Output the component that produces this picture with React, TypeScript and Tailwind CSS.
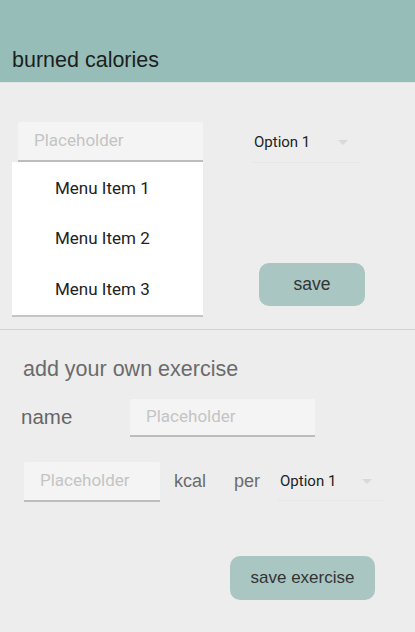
import { useState } from "react";

const arial = "font-['Liberation_Sans',Arial,sans-serif]";
const roboto = "font-['Roboto',sans-serif]";

export default function App() {
  const [items] = useState(["Menu Item 1", "Menu Item 2", "Menu Item 3"]);

  return (
    <div className="w-[415px] h-[632px] bg-[#ededed] overflow-hidden">
      <header className="h-[83px] bg-[#97bdb9] border-b border-[#dfe6e5] flex items-end px-3 pb-[10px]">
        <h1 className={`${arial} text-[21.5px] leading-[24px] text-[#1b1f1e]`}>burned calories</h1>
      </header>

      <section className="flex pt-[39px] pb-[12px] pl-3 border-b border-[#c2dbd7]">
        <div className="flex flex-col w-[191px]">
          <TextField className="ml-[6px] w-[185px] h-[40px]" />
          <ul className="bg-white border-b-2 border-[#c4c4c4] flex flex-col pt-[1px]">
            {items.map((item) => (
              <li
                key={item}
                className={`${roboto} h-[50.5px] shrink-0 flex items-center pl-[43px] text-[17px] text-[#222]`}
              >
                {item}
              </li>
            ))}
          </ul>
        </div>

        <div className="ml-[49px] flex flex-col">
          <Select className="w-[108px] h-[40px] mt-[1px]" />
          <button
            className={`${arial} ml-[7px] mt-[100px] w-[106px] h-[43px] rounded-[10px] bg-[#a9c6c2] text-[17.5px] text-[#333]`}
          >
            save
          </button>
        </div>
      </section>

      <section className="pt-[27px]">
        <h2 className={`${arial} pl-[23px] text-[21.5px] leading-[24px] text-[#6b6b6b]`}>add your own exercise</h2>

        <div className="flex items-center mt-[18px] pl-[21px]">
          <span className={`${arial} w-[109px] text-[20.5px] text-[#666]`}>name</span>
          <TextField className="w-[185px] h-[38px]" />
        </div>

        <div className="flex items-center mt-[25px] pl-[24px]">
          <TextField className="w-[136px] h-[40px]" />
          <span className={`${arial} ml-[14px] text-[18px] text-[#6b6b6b]`}>kcal</span>
          <span className={`${arial} ml-[28px] text-[18px] text-[#6b6b6b]`}>per</span>
          <Select className="ml-[18px] w-[106px] h-[38px]" />
        </div>

        <div className="flex justify-end pr-[40px] mt-[54px]">
          <button
            className={`${arial} w-[145px] h-[44px] rounded-[10px] bg-[#a9c6c2] text-[17px] text-[#333]`}
          >
            save exercise
          </button>
        </div>
      </section>
    </div>
  );
}

function TextField({ className }: { className: string }) {
  return (
    <div className={`${className} bg-[#f4f4f4] border-b-2 border-[#bdbdbd] rounded-t-[2px] flex items-center px-4`}>
      <span className={`${roboto} text-[17px] text-[#c4c4c4]`}>Placeholder</span>
    </div>
  );
}

function Select({ className }: { className: string }) {
  return (
    <div className={`${className} flex items-center justify-between border-b border-[#e6e6e6] pl-[2px] pr-[12px]`}>
      <span className={`${roboto} text-[15px] text-[#222]`}>Option 1</span>
      <svg width="10" height="5" viewBox="0 0 10 5">
        <path d="M0 0h10L5 5z" fill="#d9d9d9" />
      </svg>
    </div>
  );
}
